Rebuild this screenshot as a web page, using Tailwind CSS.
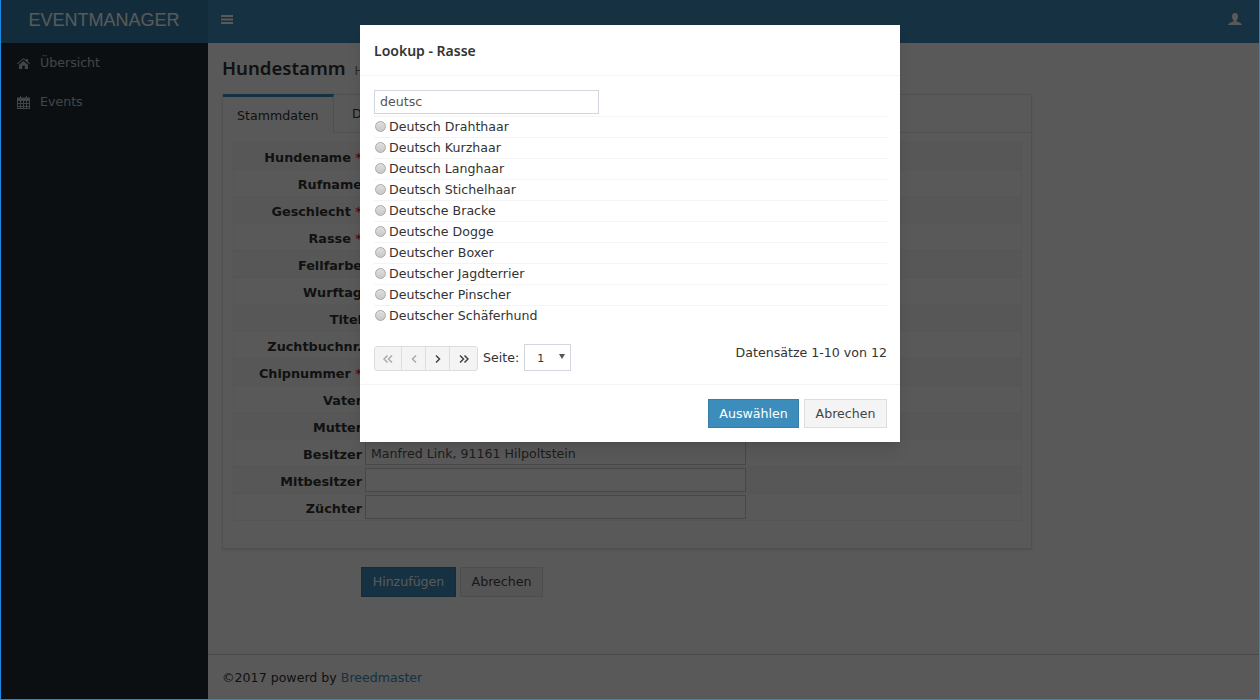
<!DOCTYPE html>
<html><head><meta charset="utf-8">
<script src="https://cdn.jsdelivr.net/npm/@tailwindcss/browser@4"></script>
</head>
<body class="bg-white font-['DejaVu_Sans',sans-serif] text-[12.6px] text-[#333]">
<div class="relative w-[1260px] h-[700px] overflow-hidden flex flex-col">
  <header class="h-[43px] flex shrink-0 bg-[#3c8dbc] text-white">
    <div class="w-[208px] flex items-center justify-center pb-[3px] bg-[#367fa9] font-['Liberation_Sans',sans-serif] text-[18px] leading-none">EVENTMANAGER</div>
    <div class="flex-1 flex items-center justify-between pl-[13px] pr-[18px] pb-[2px]">
      <svg width="12" height="11" viewBox="0 0 12 11" fill="currentColor"><rect y="0" width="12" height="2"/><rect y="3.500" width="12" height="2"/><rect y="7" width="12" height="2"/></svg>
      <svg width="14" height="14" viewBox="0 0 14 14" fill="currentColor" class="-mt-[2px]"><path d="M7 0c2 0 3 1.500 3 3.500 0 1.700-.8 3.100-1.500 3.800v1.200c2.500.7 5 1.500 5.500 3.500H0c.5-2 3-2.800 5.500-3.500V7.300C4.800 6.600 4 5.200 4 3.500 4 1.500 5 0 7 0z"/></svg>
    </div>
  </header>
  <div class="flex-1 flex min-h-0">
    <aside class="w-[208px] bg-[#222d32] text-[#b8c7ce] shrink-0 pt-px">
      <div class="h-[39px] flex items-center gap-[10px] pl-[17px] pb-[1px]">
        <svg class="w-[13px] h-[11px]" viewBox="0 0 13 11" fill="currentColor"><path d="M6.500 0 9 2.100V1h2v2.800L13 5.500l-.6.700L6.500 1.300.6 6.200 0 5.500zM2 6.700 6.500 3 11 6.700V11H7.800V7.800H5.200V11H2z"/></svg>
        <span>Übersicht</span>
      </div>
      <div class="h-[39px] flex items-center gap-[10px] pl-[17px] pb-[1px]">
        <svg class="w-[13px] h-[13px]" viewBox="0 0 13 13" fill="currentColor"><path fill-rule="evenodd" d="M3 0h1v1.500h5V0h1v1.500h3V13H0V1.500h3zM1 5v2h2V5zm3 0v2h2V5zm3 0v2h2V5zm3 0v2h2V5zM1 8v2h2V8zm3 0v2h2V8zm3 0v2h2V8zm3 0v2h2V8zM1 11v1h2v-1zm3 0v1h2v-1zm3 0v1h2v-1zm3 0v1h2v-1z"/></svg>
        <span>Events</span>
      </div>
    </aside>
    <main class="flex-1 flex flex-col min-w-0">
      <div class="flex-1 pl-[14px] pt-[14px]">
        <div class="flex items-baseline gap-[9px] h-[37px] -mt-[1px] pb-[1px] box-content">
          <h1 class="font-['Noto_Sans',sans-serif] font-semibold text-[18.6px] leading-[24px]">Hundestamm</h1>
          <span class="text-[12px] text-[#777]">Hundestamm</span>
        </div>
        <div class="w-[810px] h-[455px] border border-[#e6e6e6] shadow-sm">
          <div class="flex h-[38px] border-b border-[#e6e6e6]">
            <div class="w-[111px] h-[39px] -mt-[1px] bg-white border-t-[3px] border-[#3c8dbc] border-r border-r-[#e6e6e6] pl-[14px] pt-[10px]">Stammdaten</div>
            <div class="pl-[18px] pt-[10px]">Daten</div>
          </div>
          <div class="mx-[10px] mt-[9px] w-[789px] border border-[#f2f2f2] flex flex-col text-[12.8px]">
            <div class="h-[26px] flex items-start bg-[#f9f9f9]"><div class="w-[131px] text-right font-bold leading-[30px] pr-[3px]">Hundename <span class="text-[#d33]">*</span></div></div>
            <div class="h-[27px] flex items-start border-t border-[#f4f4f4]"><div class="w-[131px] text-right font-bold leading-[30px] pr-[3px]">Rufname</div></div>
            <div class="h-[27px] flex items-start border-t border-[#f4f4f4] bg-[#f9f9f9]"><div class="w-[131px] text-right font-bold leading-[30px] pr-[3px]">Geschlecht <span class="text-[#d33]">*</span></div></div>
            <div class="h-[27px] flex items-start border-t border-[#f4f4f4]"><div class="w-[131px] text-right font-bold leading-[30px] pr-[3px]">Rasse <span class="text-[#d33]">*</span></div></div>
            <div class="h-[27px] flex items-start border-t border-[#f4f4f4] bg-[#f9f9f9]"><div class="w-[131px] text-right font-bold leading-[30px] pr-[3px]">Fellfarbe</div></div>
            <div class="h-[27px] flex items-start border-t border-[#f4f4f4]"><div class="w-[131px] text-right font-bold leading-[30px] pr-[3px]">Wurftag</div></div>
            <div class="h-[27px] flex items-start border-t border-[#f4f4f4] bg-[#f9f9f9]"><div class="w-[131px] text-right font-bold leading-[30px] pr-[3px]">Titel</div></div>
            <div class="h-[27px] flex items-start border-t border-[#f4f4f4]"><div class="w-[131px] text-right font-bold leading-[30px] pr-[3px]">Zuchtbuchnr.</div></div>
            <div class="h-[27px] flex items-start border-t border-[#f4f4f4] bg-[#f9f9f9]"><div class="w-[131px] text-right font-bold leading-[30px] pr-[3px]">Chipnummer <span class="text-[#d33]">*</span></div></div>
            <div class="h-[27px] flex items-start border-t border-[#f4f4f4]"><div class="w-[131px] text-right font-bold leading-[30px] pr-[3px]">Vater</div></div>
            <div class="h-[27px] flex items-start border-t border-[#f4f4f4] bg-[#f9f9f9]"><div class="w-[131px] text-right font-bold leading-[30px] pr-[3px]">Mutter</div></div>
            <div class="h-[27px] flex items-start border-t border-[#f4f4f4]"><div class="w-[131px] text-right font-bold leading-[30px] pr-[3px]">Besitzer</div><div class="w-[381px] h-[24px] mt-px border border-[#ccc] bg-white text-[#555] text-[12.6px] px-[5px] leading-[24px]">Manfred Link, 91161 Hilpoltstein</div></div>
            <div class="h-[27px] flex items-start border-t border-[#f4f4f4] bg-[#f9f9f9]"><div class="w-[131px] text-right font-bold leading-[30px] pr-[3px]">Mitbesitzer</div><div class="w-[381px] h-[24px] mt-px border border-[#ccc] bg-white"></div></div>
            <div class="h-[27px] flex items-start border-t border-[#f4f4f4]"><div class="w-[131px] text-right font-bold leading-[30px] pr-[3px]">Züchter</div><div class="w-[381px] h-[24px] mt-px border border-[#ccc] bg-white"></div></div>
          </div>
        </div>
        <div class="flex gap-[4px] ml-[139px] mt-[18px]">
          <div class="w-[95px] h-[30px] bg-[#3c8dbc] border border-[#367fa9] text-white text-center leading-[28px]">Hinzufügen</div>
          <div class="w-[83px] h-[30px] bg-[#f4f4f4] border border-[#ddd] text-[#444] text-center leading-[28px]">Abrechen</div>
        </div>
      </div>
      <footer class="h-[46px] shrink-0 border-t border-[#d2d6de] pl-[14px] pt-[14px]">©2017 powerd by <span class="text-[#3c8dbc]">Breedmaster</span></footer>
    </main>
  </div>

  <div class="absolute inset-0 bg-black/65 border-x border-b border-[#1e88e5]"></div>

  <div class="absolute left-[360px] top-[25px] w-[540px] h-[417px] bg-white flex flex-col shadow-lg">
    <div class="h-[51px] border-b border-[#f4f4f4] flex items-center px-[14px]">
      <h4 class="font-['Noto_Sans',sans-serif] font-semibold text-[14px] text-[#333]">Lookup - Rasse</h4>
    </div>
    <div class="h-[309px] border-b border-[#f4f4f4] px-[14px] pt-[14px] flex flex-col">
      <div class="w-[225px] h-[24px] border border-[#d2d6de] text-[#555] pl-[5px] leading-[22px] mb-[2px]">deutsc</div>
      <div class="w-[513px] border-t border-[#f4f4f4] h-[21px] flex items-center gap-[3px]"><span class="w-[11px] h-[11px] ml-[1px] -mt-px rounded-full border border-[#aaa] bg-gradient-to-b from-[#e0e0e0] to-[#c8c8c8]"></span><span>Deutsch Drahthaar</span></div>
      <div class="w-[513px] border-t border-[#f4f4f4] h-[21px] flex items-center gap-[3px]"><span class="w-[11px] h-[11px] ml-[1px] -mt-px rounded-full border border-[#aaa] bg-gradient-to-b from-[#e0e0e0] to-[#c8c8c8]"></span><span>Deutsch Kurzhaar</span></div>
      <div class="w-[513px] border-t border-[#f4f4f4] h-[21px] flex items-center gap-[3px]"><span class="w-[11px] h-[11px] ml-[1px] -mt-px rounded-full border border-[#aaa] bg-gradient-to-b from-[#e0e0e0] to-[#c8c8c8]"></span><span>Deutsch Langhaar</span></div>
      <div class="w-[513px] border-t border-[#f4f4f4] h-[21px] flex items-center gap-[3px]"><span class="w-[11px] h-[11px] ml-[1px] -mt-px rounded-full border border-[#aaa] bg-gradient-to-b from-[#e0e0e0] to-[#c8c8c8]"></span><span>Deutsch Stichelhaar</span></div>
      <div class="w-[513px] border-t border-[#f4f4f4] h-[21px] flex items-center gap-[3px]"><span class="w-[11px] h-[11px] ml-[1px] -mt-px rounded-full border border-[#aaa] bg-gradient-to-b from-[#e0e0e0] to-[#c8c8c8]"></span><span>Deutsche Bracke</span></div>
      <div class="w-[513px] border-t border-[#f4f4f4] h-[21px] flex items-center gap-[3px]"><span class="w-[11px] h-[11px] ml-[1px] -mt-px rounded-full border border-[#aaa] bg-gradient-to-b from-[#e0e0e0] to-[#c8c8c8]"></span><span>Deutsche Dogge</span></div>
      <div class="w-[513px] border-t border-[#f4f4f4] h-[21px] flex items-center gap-[3px]"><span class="w-[11px] h-[11px] ml-[1px] -mt-px rounded-full border border-[#aaa] bg-gradient-to-b from-[#e0e0e0] to-[#c8c8c8]"></span><span>Deutscher Boxer</span></div>
      <div class="w-[513px] border-t border-[#f4f4f4] h-[21px] flex items-center gap-[3px]"><span class="w-[11px] h-[11px] ml-[1px] -mt-px rounded-full border border-[#aaa] bg-gradient-to-b from-[#e0e0e0] to-[#c8c8c8]"></span><span>Deutscher Jagdterrier</span></div>
      <div class="w-[513px] border-t border-[#f4f4f4] h-[21px] flex items-center gap-[3px]"><span class="w-[11px] h-[11px] ml-[1px] -mt-px rounded-full border border-[#aaa] bg-gradient-to-b from-[#e0e0e0] to-[#c8c8c8]"></span><span>Deutscher Pinscher</span></div>
      <div class="w-[513px] border-t border-[#f4f4f4] h-[21px] flex items-center gap-[3px]"><span class="w-[11px] h-[11px] ml-[1px] -mt-px rounded-full border border-[#aaa] bg-gradient-to-b from-[#e0e0e0] to-[#c8c8c8]"></span><span>Deutscher Schäferhund</span></div>
      <div class="flex justify-between mt-[18px] w-[513px]">
        <div class="flex items-center gap-[5px]">
          <div class="flex w-[104px] h-[25px] mt-[2px] border border-[#ddd] rounded-[3px] bg-[#f4f4f4] text-[#444] divide-x divide-[#ddd]">
            <span class="w-[27px] flex items-center justify-center text-[#aaa]"><svg width="10" height="8" viewBox="0 0 10 8" fill="none" stroke="currentColor" stroke-width="1.500"><path d="M4.500.5 1 4l3.500 3.500M9 .5 5.500 4 9 7.500"/></svg></span>
            <span class="w-[24px] flex items-center justify-center text-[#aaa]"><svg width="6" height="8" viewBox="0 0 6 8" fill="none" stroke="currentColor" stroke-width="1.500"><path d="M5 .5 1.500 4 5 7.500"/></svg></span>
            <span class="w-[24px] flex items-center justify-center"><svg width="6" height="8" viewBox="0 0 6 8" fill="none" stroke="currentColor" stroke-width="1.500"><path d="M1 .5 4.500 4 1 7.500"/></svg></span>
            <span class="flex-1 flex items-center justify-center"><svg width="10" height="8" viewBox="0 0 10 8" fill="none" stroke="currentColor" stroke-width="1.500"><path d="M1 .5 4.500 4 1 7.500M5.500.5 9 4 5.500 7.500"/></svg></span>
          </div>
          <span class="mt-[1px]">Seite:</span>
          <div class="relative w-[47px] h-[27px] border border-[#d2d6de] text-[11px] pl-[12px] leading-[27px]">1<span class="absolute right-[5px] top-[9px] w-0 h-0 border-x-[3.500px] border-x-transparent border-t-[5px] border-t-[#555]"></span></div>
        </div>
        <span class="leading-[18px]">Datensätze 1-10 von 12</span>
      </div>
    </div>
    <div class="flex-1 flex justify-end items-start gap-[5px] px-[13px] pt-[14px]">
      <div class="w-[91px] h-[29px] bg-[#3c8dbc] border border-[#367fa9] text-white text-center leading-[27px]">Auswählen</div>
      <div class="w-[83px] h-[29px] bg-[#f4f4f4] border border-[#ddd] text-[#444] text-center leading-[27px]">Abrechen</div>
    </div>
  </div>
</div>
</body></html>
